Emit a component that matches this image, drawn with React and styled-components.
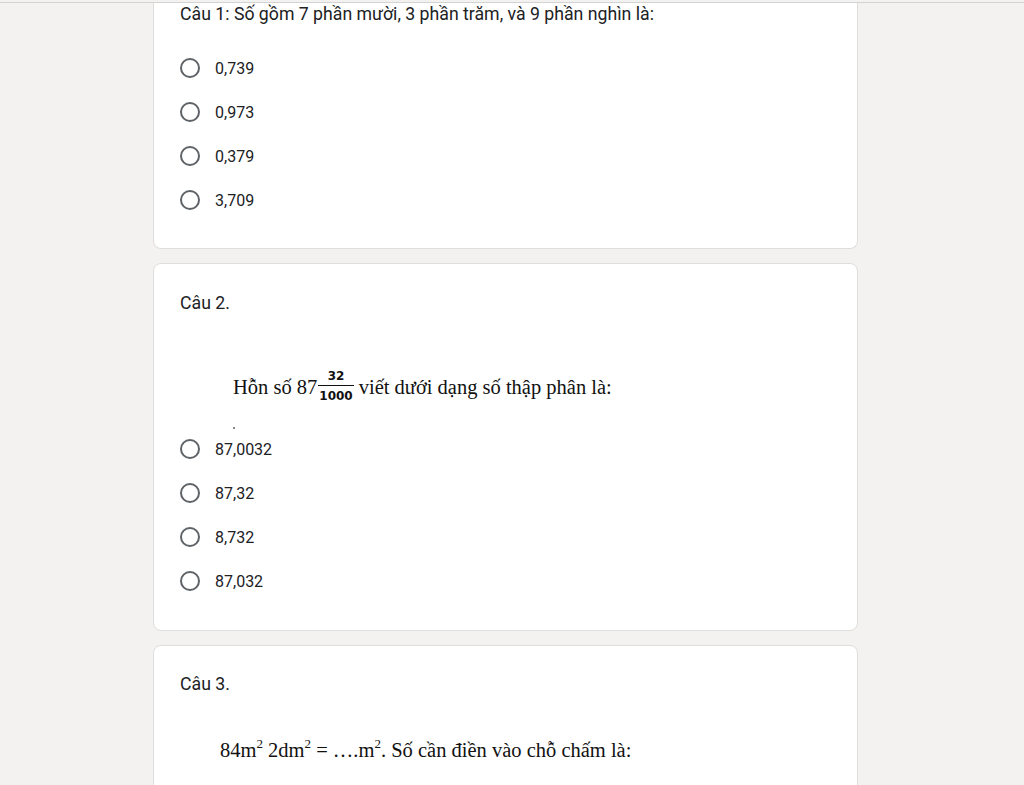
import React from "react";
import styled, { createGlobalStyle } from "styled-components";

const GlobalStyle = createGlobalStyle`
  html, body {
    margin: 0;
    padding: 0;
    background: #f4f2f1;
  }
  body {
    font-family: Roboto, "Noto Sans", Arial, sans-serif;
    color: #202124;
  }
`;

const Page = styled.div`
  min-height: 785px;
  background: #f4f2f1;
  overflow: hidden;
`;

const TopEdge = styled.div`
  height: 2px;
  border-bottom: 1px solid #d3d3d3;
`;

const Column = styled.div`
  width: 705px;
  margin-left: 153px;
  display: flex;
  flex-direction: column;
  gap: 14px;
`;

const Card = styled.div`
  box-sizing: border-box;
  background: #fff;
  border: 1px solid #e0dedc;
  border-top: ${({ $cut }) => ($cut ? "none" : "1px solid #e0dedc")};
  border-radius: ${({ $cut }) => ($cut ? "0 0 8px 8px" : "8px")};
  padding: ${({ $top }) => $top}px 26px ${({ $bottom = 25 }) => $bottom}px 26px;
`;

const Title = styled.div`
  font-size: 17.7px;
  line-height: 22px;
  color: #202124;
`;

const Options = styled.div`
  display: flex;
  flex-direction: column;
  margin-top: ${({ $gap }) => $gap}px;
`;

const Option = styled.label`
  height: 44px;
  display: flex;
  align-items: center;
  gap: 15px;
  font-size: 16px;
  color: #202124;
`;

const Radio = styled.span`
  box-sizing: border-box;
  width: 20px;
  height: 20px;
  border-radius: 50%;
  border: 2px solid #5f6368;
  flex: none;
`;

const MathImage = styled.div`
  height: ${({ $h }) => $h}px;
  padding-left: ${({ $indent }) => $indent}px;
  padding-top: ${({ $top }) => $top}px;
  box-sizing: border-box;
  font-family: "Liberation Serif", "Times New Roman", serif;
  font-size: 20.5px;
  line-height: 24px;
  color: #111;
`;

const Line = styled.div`
  white-space: nowrap;
`;

const Frac = styled.span`
  display: inline-flex;
  flex-direction: column;
  align-items: center;
  vertical-align: middle;
  margin: 0 5px 0 1px;
  font-family: "DejaVu Sans", "Liberation Sans", sans-serif;
  font-weight: bold;
  font-size: 12px;
  line-height: 12px;
  position: relative;
  top: -3px;
`;

const Num = styled.span`
  padding: 0 2px 3px;
  border-bottom: 1px solid #111;
  align-self: stretch;
  text-align: center;
`;

const Den = styled.span`
  padding: 4px 1px 0;
`;

const Dot = styled.div`
  width: 2px;
  height: 2px;
  background: #888;
  margin-top: 22px;
`;

const Sup = styled.sup`
  font-size: 13px;
  line-height: 0;
  vertical-align: 9px;
`;

const Choices = ({ items, gap }) => (
  <Options $gap={gap}>
    {items.map((t) => (
      <Option key={t}>
        <Radio />
        {t}
      </Option>
    ))}
  </Options>
);

export default function App() {
  return (
    <Page>
      <GlobalStyle />
      <TopEdge />
      <Column>
        <Card $cut $top={0} $bottom={26}>
          <Title>Câu 1: Số gồm 7 phần mười, 3 phần trăm, và 9 phần nghìn là:</Title>
          <Choices gap={21} items={["0,739", "0,973", "0,379", "3,709"]} />
        </Card>

        <Card $top={28} $bottom={27}>
          <Title>Câu 2.</Title>
          <MathImage $h={113} $indent={53} $top={59}>
            <Line>
              Hỗn số 87
              <Frac>
                <Num>32</Num>
                <Den>1000</Den>
              </Frac>
              viết dưới dạng số thập phân là:
            </Line>
            <Dot />
          </MathImage>
          <Choices gap={0} items={["87,0032", "87,32", "8,732", "87,032"]} />
        </Card>

        <Card $top={27}>
          <Title>Câu 3.</Title>
          <MathImage $h={120} $indent={40} $top={43}>
            <Line>
              84m<Sup>2</Sup> 2dm<Sup>2</Sup> = ….m<Sup>2</Sup>. Số cần điền vào chỗ chấm là:
            </Line>
          </MathImage>
        </Card>
      </Column>
    </Page>
  );
}
